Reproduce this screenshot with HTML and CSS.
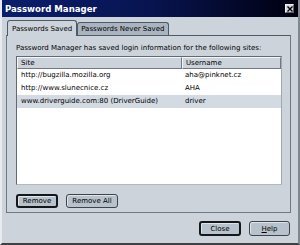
FILE: index.html
```html
<!DOCTYPE html>
<html>
<head>
<meta charset="utf-8">
<link rel="stylesheet" href="styles.css">
</head>
<body>
<div class="window">
  <div class="titlebar">
    <span class="title">Password Manager</span>
    <span class="close-btn"><svg width="6" height="6" viewBox="0 0 6 6"><path d="M0.5 0.5L5.5 5.5M5.5 0.5L0.5 5.5" stroke="#000" stroke-width="1.4"/></svg></span>
  </div>
  <div class="body">
    <div class="tabs">
      <div class="tab active">Passwords Saved</div>
      <div class="tab">Passwords Never Saved</div>
    </div>
    <div class="panel">
      <div class="intro">Password Manager has saved login information for the following sites:</div>
      <div class="tree">
        <div class="row head">
          <div class="col site">Site</div>
          <div class="col user">Username</div>
        </div>
        <div class="row"><div class="col site">http://bugzilla.mozilla.org</div><div class="col user">aha@pinknet.cz</div></div>
        <div class="row"><div class="col site">http://www.slunecnice.cz</div><div class="col user">AHA</div></div>
        <div class="row selected"><div class="col site">www.driverguide.com:80 (DriverGuide)</div><div class="col user">driver</div></div>
      </div>
      <div class="panel-buttons">
        <button class="btn focus w-remove">Remove</button>
        <button class="btn w-removeall">Remove All</button>
      </div>
    </div>
    <div class="footer">
      <button class="btn focus w-close">Close</button>
      <button class="btn w-help"><u>H</u>elp</button>
    </div>
  </div>
</div>
</body>
</html>
```
FILE: styles.css
```css
* { box-sizing: border-box; }
html, body { margin: 0; padding: 0; }
body { width: 300px; height: 245px; overflow: hidden; background: #ccd3db; font-family: "DejaVu Sans", Verdana, sans-serif; font-size: 7px; color: #000; }
.window { width: 300px; height: 245px; display: flex; flex-direction: column; background: #ccd3db; border-left: 2px solid #e8ecf0; border-bottom: 2px solid #404040; border-right: 2px solid #808890; }
.titlebar { height: 17px; display: flex; align-items: center; justify-content: space-between; padding: 0 4px 0 3px; background: linear-gradient(to right, #0a1e6e 0%, #081450 50%, #000010 100%); }
.title { color: #fff; font-weight: bold; font-size: 8.6px; }
.close-btn { width: 9px; height: 9px; background: #d4d8dc; border: 1px solid #f0f0f0; border-right-color: #606060; border-bottom-color: #606060; display: flex; align-items: center; justify-content: center; }
.body { flex: 1; display: flex; flex-direction: column; padding: 3px 7px 0 4px; }
.tabs { display: flex; align-items: flex-end; height: 15px; margin-left: 1px; position: relative; z-index: 1; }
.tab { height: 13px; padding: 0 3px; display: flex; align-items: center; border: 1px solid #505a64; border-bottom: none; border-radius: 3px 3px 0 0; background: #a9b4bf; }
.tab.active { background: #ccd3db; padding: 0 4px; margin-bottom: -1px; height: 16px; }
.panel { border: 1px solid #6e7882; border-top-color: #505a64; height: 178px; display: flex; flex-direction: column; padding: 6px 8px 0 9px; }
.intro { height: 12px; line-height: 12px; }
.tree { margin-top: 2px; height: 129px; background: #fff; border: 1px solid #606a74; border-right-color: #a0a8b0; border-bottom-color: #b0b8c0; }
.row { display: flex; height: 13px; line-height: 13px; }
.row.head { height: 12px; line-height: 11px; background: #ccd3db; }
.row.head .col { border: 1px solid #f4f6f8; border-right-color: #707880; border-bottom-color: #707880; }
.col.site { width: 165px; padding-left: 4px; white-space: nowrap; }
.col.user { flex: 1; padding-left: 3px; }
.row.head .col.site { padding-left: 3px; }
.row.selected { background: #d3dae2; }
.panel-buttons { display: flex; gap: 8px; margin-top: 9px; }
.btn { font-family: inherit; font-size: 7px; height: 14px; padding: 0; margin: 0; background: #b8c2cc; color: #000; border: 1px solid #3c444c; border-radius: 3px; box-shadow: inset 1px 1px 0 #dfe4e9; display: flex; align-items: center; justify-content: center; }
.btn.focus { border: 2px solid #14181c; }
.w-remove { width: 42px; }
.w-removeall { width: 52px; }
.footer { display: flex; justify-content: flex-end; gap: 8px; padding-top: 8px; padding-right: 1px; }
.w-close { width: 42px; height: 15px; }
.w-help { width: 41px; height: 15px; }
```
